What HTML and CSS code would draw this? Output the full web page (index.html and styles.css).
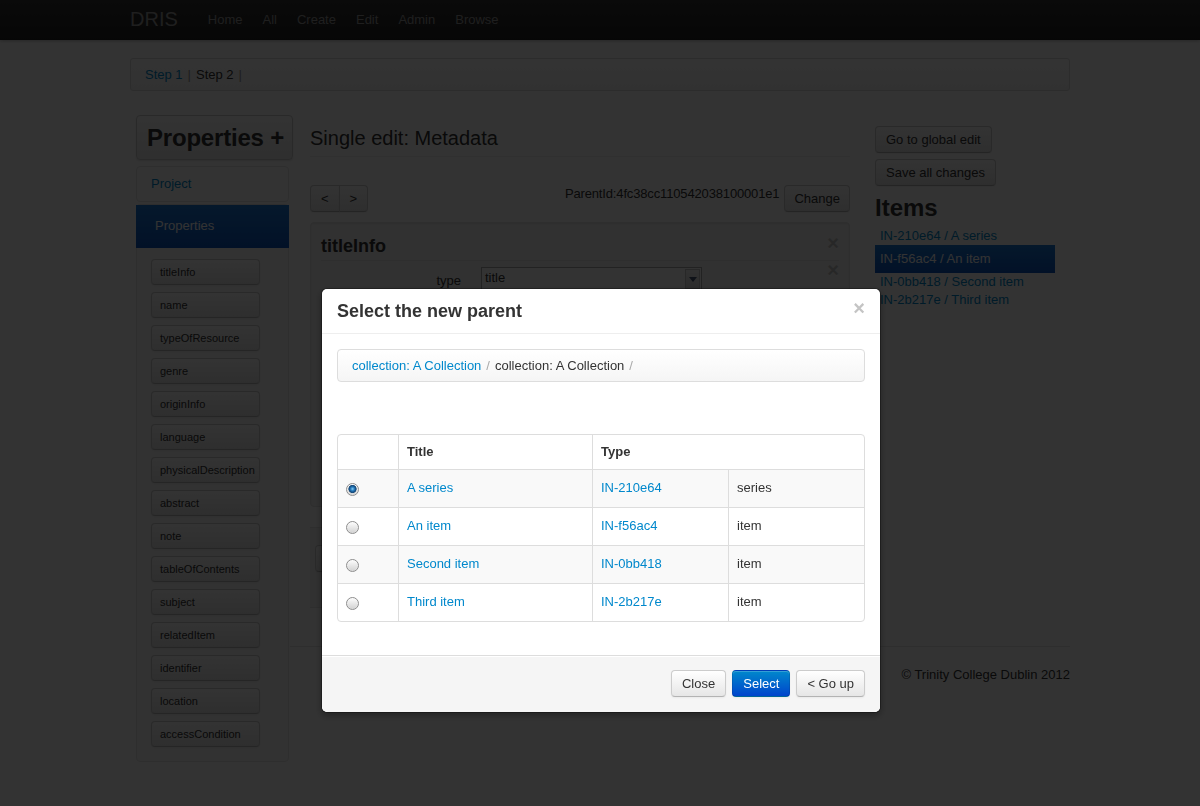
FILE: index.html
```html
<!DOCTYPE html>
<html>
<head>
<meta charset="utf-8">
<title>DRIS - Single edit</title>
<link rel="stylesheet" href="styles.css">
</head>
<body>
<div class="navbar">
  <div class="navbar-inner">
    <div class="container nav-row">
      <a class="brand" href="#">DRIS</a>
      <ul class="nav">
        <li><a href="#">Home</a></li>
        <li><a href="#">All</a></li>
        <li><a href="#">Create</a></li>
        <li><a href="#">Edit</a></li>
        <li><a href="#">Admin</a></li>
        <li><a href="#">Browse</a></li>
      </ul>
    </div>
  </div>
</div>

<div class="container">
  <div class="steps"><a href="#">Step 1</a><span class="divider">|</span><span>Step 2</span><span class="divider">|</span></div>

  <div class="layout">
    <aside class="sidebar">
      <div class="prop-title">Properties <span>+</span></div>
      <div class="acc-group">
        <div class="acc-heading"><a href="#">Project</a></div>
      </div>
      <div class="acc-group acc-open">
        <div class="acc-heading active">Properties</div>
        <div class="acc-body">
          <div class="prop-btn">titleInfo</div>
          <div class="prop-btn">name</div>
          <div class="prop-btn">typeOfResource</div>
          <div class="prop-btn">genre</div>
          <div class="prop-btn">originInfo</div>
          <div class="prop-btn">language</div>
          <div class="prop-btn">physicalDescription</div>
          <div class="prop-btn">abstract</div>
          <div class="prop-btn">note</div>
          <div class="prop-btn">tableOfContents</div>
          <div class="prop-btn">subject</div>
          <div class="prop-btn">relatedItem</div>
          <div class="prop-btn">identifier</div>
          <div class="prop-btn">location</div>
          <div class="prop-btn">accessCondition</div>
        </div>
      </div>
    </aside>

    <div class="content">
      <div class="content-row">
        <section class="main">
          <div class="page-header"><h3>Single edit: Metadata</h3></div>
          <div class="toolbar">
            <div class="btn-group"><button class="btn">&lt;</button><button class="btn">&gt;</button></div>
            <div class="parent"><span class="parent-id">ParentId:4fc38cc110542038100001e1</span><button class="btn btn-change">Change</button></div>
          </div>
          <div class="well">
            <div class="well-head"><h4>titleInfo</h4><span class="close">&times;</span></div>
            <div class="form-row">
              <label>type</label>
              <div class="select"><span class="select-text">title</span><span class="select-arrow"><svg width="8" height="5" viewBox="0 0 8 5"><path d="M0 0h8L4 5z" fill="#4a5a78"/></svg></span></div>
              <span class="close close-row">&times;</span>
            </div>
          </div>
          <div class="form-actions"><button class="btn">Save</button></div>
        </section>

        <aside class="rightcol">
          <div class="btn-line"><button class="btn">Go to global edit</button></div>
          <div class="btn-line"><button class="btn">Save all changes</button></div>
          <h2>Items</h2>
          <ul class="items">
            <li><a href="#">IN-210e64 / A series</a></li>
            <li class="active"><a href="#">IN-f56ac4 / An item</a></li>
            <li><a href="#">IN-0bb418 / Second item</a></li>
            <li><a href="#">IN-2b217e / Third item</a></li>
          </ul>
        </aside>
      </div>
      <footer class="footer">
        <hr>
        <p>&copy; Trinity College Dublin 2012</p>
      </footer>
    </div>
  </div>
</div>

<div class="dialog">
  <div class="dialog-header">
    <h3>Select the new parent</h3>
    <span class="close">&times;</span>
  </div>
  <div class="dialog-body">
    <div class="crumb"><a href="#">collection: A Collection</a><span class="divider">/</span><span>collection: A Collection</span><span class="divider">/</span></div>
    <table class="table">
      <thead>
        <tr><th class="c1"></th><th class="c2">Title</th><th colspan="2">Type</th></tr>
      </thead>
      <tbody>
        <tr class="odd"><td class="c1"><input class="radio" type="radio" name="p" checked></td><td class="c2"><a href="#">A series</a></td><td class="c3"><a href="#">IN-210e64</a></td><td>series</td></tr>
        <tr><td class="c1"><input class="radio" type="radio" name="p"></td><td class="c2"><a href="#">An item</a></td><td class="c3"><a href="#">IN-f56ac4</a></td><td>item</td></tr>
        <tr class="odd"><td class="c1"><input class="radio" type="radio" name="p"></td><td class="c2"><a href="#">Second item</a></td><td class="c3"><a href="#">IN-0bb418</a></td><td>item</td></tr>
        <tr><td class="c1"><input class="radio" type="radio" name="p"></td><td class="c2"><a href="#">Third item</a></td><td class="c3"><a href="#">IN-2b217e</a></td><td>item</td></tr>
      </tbody>
    </table>
  </div>
  <div class="dialog-footer">
    <button class="btn">Close</button>
    <button class="btn btn-primary">Select</button>
    <button class="btn">&lt; Go up</button>
  </div>
</div>
</body>
</html>
```

FILE: styles.css
```css
* { box-sizing: border-box; }
html, body { margin: 0; padding: 0; }
body {
  font-family: "Liberation Sans", Helvetica, Arial, sans-serif;
  font-size: 13px;
  line-height: 18px;
  color: #333;
  background: #fff;
}
a { color: #0088cc; text-decoration: none; }
ul { list-style: none; margin: 0; padding: 0; }

.container { width: 940px; margin: 0 auto; }

/* navbar */
.navbar-inner {
  height: 40px;
  background: linear-gradient(#333, #222);
  box-shadow: 0 1px 3px rgba(0,0,0,.25);
}
.nav-row { display: flex; align-items: center; height: 40px; }
.brand {
  font-size: 20px;
  line-height: 20px;
  color: #999;
  padding: 9px 20px 11px 0;
}
.nav { display: flex; }
.nav a {
  display: block;
  color: #999;
  padding: 0 10px 2px;
  line-height: 19px;
}

/* steps breadcrumb */
.steps {
  margin-top: 18px;
  height: 33px;
  padding: 7px 14px 6px;
  border: 1px solid #ddd;
  border-radius: 3px;
  background: linear-gradient(#fff, #f5f5f5);
  box-shadow: inset 0 1px 0 #fff;
}
.steps .divider { color: #999; padding: 0 5px; }

/* layout */
.layout { display: flex; align-items: flex-start; margin-top: 24px; }
.sidebar { width: 160px; flex: none; }
.content { width: 760px; margin-left: 20px; flex: none; }
.content-row { display: flex; align-items: flex-start; }

/* sidebar */
.prop-title {
  margin-left: 6px;
  width: 157px;
  height: 45px;
  border: 1px solid #ccc;
  border-radius: 4px;
  background: linear-gradient(#fff, #e8e8e8);
  box-shadow: 0 1px 2px rgba(0,0,0,.12);
  font-size: 24px;
  font-weight: bold;
  line-height: 43px;
  padding-left: 10px;
  white-space: nowrap;
  letter-spacing: -0.2px;
}
.acc-group {
  margin: 6px 0 0 6px;
  width: 153px;
  border: 1px solid #e5e5e5;
  border-radius: 4px;
  background: #fff;
}
.acc-open { margin-top: 2px; background: #f9f9f9; }
.acc-heading a { display: block; padding: 8px 14px; }
.acc-heading.active {
  padding: 12px 19px 13px;
  color: #fff;
  background: linear-gradient(#1a7ad8, #0d56c2);
  margin: 0 -1px;
}
.acc-body { padding: 11px 0 14px 14px; }
.prop-btn {
  width: 109px;
  height: 26px;
  margin-bottom: 7px;
  padding-left: 8px;
  border: 1px solid #ccc;
  border-bottom-color: #b8b8b8;
  border-radius: 4px;
  background: linear-gradient(#fff, #e6e6e6);
  box-shadow: 0 1px 2px rgba(0,0,0,.05);
  font-size: 11px;
  line-height: 24px;
  white-space: nowrap;
}
.prop-btn:last-child { margin-bottom: 0; }

/* buttons */
.btn {
  display: inline-block;
  font: inherit;
  font-size: 13px;
  line-height: 18px;
  color: #333;
  padding: 4px 10px 3px;
  border: 1px solid #ccc;
  border-bottom-color: #b3b3b3;
  border-radius: 4px;
  background: linear-gradient(#fff, #e6e6e6);
  box-shadow: inset 0 1px 0 rgba(255,255,255,.2), 0 1px 2px rgba(0,0,0,.05);
  cursor: pointer;
  margin: 0;
}
.btn-primary {
  color: #fff;
  background: linear-gradient(#0088cc, #0044cc);
  border-color: rgba(0,0,0,.1) rgba(0,0,0,.1) rgba(0,0,0,.25);
}
.btn-change { padding: 4px 9px 3px; }

/* main */
.main { width: 540px; flex: none; }
.page-header { margin-top: 8px; padding-bottom: 3px; border-bottom: 1px solid #eee; }
.page-header h3 { margin: 0; font-size: 20px; line-height: 30px; font-weight: normal; }
.toolbar { margin-top: 28px; height: 27px; display: flex; justify-content: space-between; }
.btn-group { display: flex; }
.btn-group .btn:first-child { border-radius: 4px 0 0 4px; }
.btn-group .btn:last-child { border-radius: 0 4px 4px 0; margin-left: -1px; }
.parent { display: flex; align-items: flex-start; }
.parent-id { margin-right: 5px; letter-spacing: -0.15px; }

.well {
  margin-top: 10px;
  height: 285px;
  padding: 10px;
  border: 1px solid #e3e3e3;
  border-radius: 4px;
  background: #f2f2f2;
  box-shadow: inset 0 1px 1px rgba(0,0,0,.05);
}
.well-head { display: flex; justify-content: space-between; border-bottom: 1px solid #e5e5e5; }
.well-head h4 { margin: 0; font-size: 18px; line-height: 27px; }
.well-head .close { margin-top: 1px; }
.close {
  font-size: 20px;
  font-weight: bold;
  line-height: 18px;
  color: #c4c4c4;
  text-shadow: 0 1px 0 #fff;
}
.form-row { display: flex; margin-top: 6px; }
.form-row label { width: 140px; text-align: right; padding-top: 5px; }
.select {
  margin-left: 20px;
  width: 221px;
  height: 28px;
  border: 1px solid #aaa;
  background: #fff;
  display: flex;
  align-items: flex-start;
}
.select-text { flex: 1; padding: 0 3px; line-height: 20px; }
.select-arrow {
  width: 15px;
  height: 20px;
  margin: 1px;
  display: flex;
  align-items: center;
  justify-content: center;
  border: 1px solid #c8c8c8;
  background: linear-gradient(#f6f6f6, #dcdcdc);
}
.close-row { margin-left: auto; margin-top: -6px; }
.form-actions {
  margin-top: 20px;
  height: 81px;
  padding: 17px 5px 0;
  background: #f5f5f5;
  border-top: 1px solid #e5e5e5;
  border-bottom: 1px solid #e5e5e5;
}

/* right column */
.rightcol { width: 200px; margin-left: 20px; padding: 11px 0 0 5px; }
.btn-line { margin-bottom: 6px; }
.btn-line + .btn-line { margin-bottom: 0; }
.rightcol h2 { margin: 4px 0 1px; font-size: 24px; line-height: 36px; }
.items { width: 180px; }
.items a { display: block; padding: 0 5px; line-height: 18px; }
.items .active a {
  padding: 5px;
  color: #fff;
  background: linear-gradient(#1a7ad8, #0d56c2);
}

/* footer */
.footer hr {
  margin: 38px 0 19px -20px;
  height: 0;
  border: 0;
  border-top: 1px solid #e5e5e5;
}
.footer p { margin: 0; text-align: right; }

/* dialog; its huge shadow spread dims the page behind it */
.dialog {
  position: fixed;
  z-index: 20;
  top: 288px;
  left: 50%;
  margin-left: -279px;
  width: 560px;
  background: #fff;
  border: 1px solid rgba(0,0,0,.3);
  border-radius: 6px;
  box-shadow: 0 3px 7px rgba(0,0,0,.3), 0 0 0 3000px rgba(0,0,0,.8);
  background-clip: padding-box;
}
.dialog-header {
  padding: 9px 15px 8px;
  border-bottom: 1px solid #eee;
  display: flex;
  justify-content: space-between;
  align-items: flex-start;
}
.dialog-header h3 { margin: 0; font-size: 18px; line-height: 27px; }
.dialog-header .close { margin-top: 1px; }
.dialog-body { padding: 15px; }
.crumb {
  height: 33px;
  padding: 7px 14px 6px;
  border: 1px solid #ddd;
  border-radius: 4px;
  background: linear-gradient(#fff, #f5f5f5);
  box-shadow: inset 0 1px 0 #fff;
  margin-bottom: 52px;
}
.crumb .divider { color: #aaa; padding: 0 5px; }

.table {
  width: 100%;
  table-layout: fixed;
  border-collapse: separate;
  border-spacing: 0;
  border: 1px solid #ddd;
  border-radius: 4px;
  margin-bottom: 18px;
}
.table th, .table td {
  text-align: left;
  vertical-align: top;
  border-left: 1px solid #ddd;
  border-top: 1px solid #ddd;
}
.table th { padding: 8px; font-weight: bold; line-height: 18px; }
.table td { padding: 9px 8px 10px; line-height: 18px; }
.table thead th { border-top: 0; }
.table .c1 { border-left: 0; width: 60px; }
.table .c2 { width: 194px; }
.table .c3 { width: 161px; }
.table tbody tr.odd td { background: #f9f9f9; }

.radio {
  -webkit-appearance: none;
  appearance: none;
  display: block;
  width: 13px;
  height: 13px;
  margin: 4px 0 0;
  border: 1px solid #8d8d8d;
  border-radius: 50%;
  background: linear-gradient(#fdfdfd, #d2d2d2);
  box-shadow: inset 0 0 1px #fff;
}
.radio:checked {
  background:
    radial-gradient(circle at 50% 45%, #8fd0f5 0, #2f86c6 1.6px, #134f87 3.2px, #1c4c78 3.8px, rgba(28,76,120,0) 4.4px),
    linear-gradient(#fdfdfd, #d2d2d2);
}

.dialog-footer {
  padding: 14px 15px 15px;
  background: #f5f5f5;
  border-top: 1px solid #ddd;
  border-radius: 0 0 6px 6px;
  box-shadow: inset 0 1px 0 #fff;
  display: flex;
  justify-content: flex-end;
  gap: 6px;
}
```
